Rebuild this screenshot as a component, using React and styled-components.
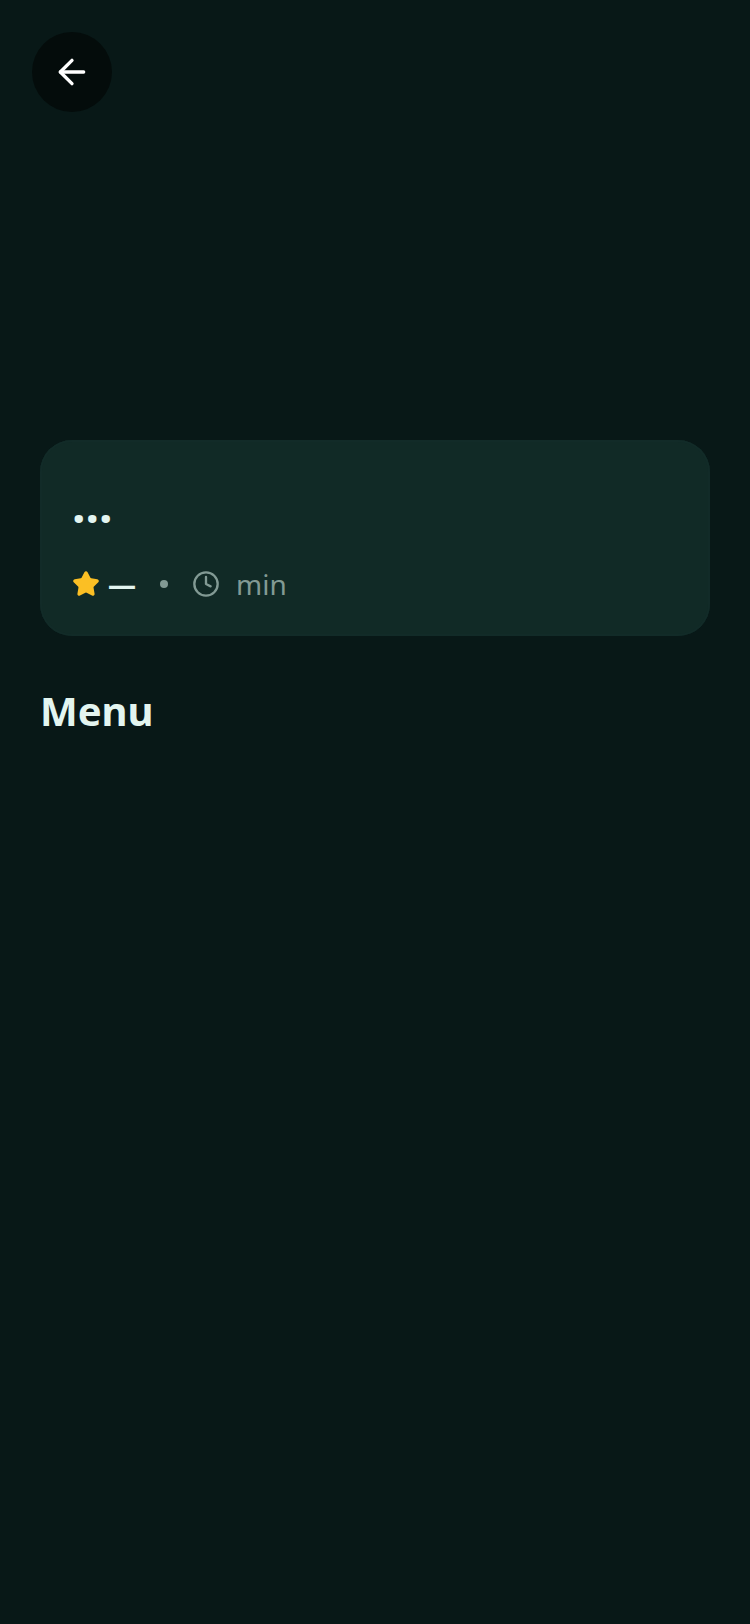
import styled, { createGlobalStyle } from "styled-components";
import { ArrowLeft, Clock, Star } from "lucide-react";

const GlobalStyle = createGlobalStyle`
  * {
    box-sizing: border-box;
  }
  body {
    margin: 0;
    background: #081817;
    color: #e3f5f0;
    font-family: "Noto Sans", sans-serif;
  }
`;

const Hero = styled.header`
  height: 440px;
  padding: 32px;
`;

const BackButton = styled.button`
  display: flex;
  align-items: center;
  justify-content: center;
  width: 80px;
  height: 80px;
  padding: 0;
  border: none;
  border-radius: 50%;
  background: #040c0b;
  color: #ffffff;
  cursor: pointer;
`;

const Content = styled.main`
  padding: 0 40px;
`;

const InfoCard = styled.section`
  padding: 32px;
  border-radius: 32px;
  background: #112a26;
  box-shadow: inset 0 0 0 2px #122b28;
`;

const Name = styled.h1`
  margin: 0;
  font-size: 48px;
  line-height: 66px;
  font-weight: 700;
`;

const Meta = styled.div`
  display: flex;
  align-items: center;
  gap: 24px;
  margin-top: 26px;
  font-size: 28px;
  line-height: 40px;
`;

const MetaItem = styled.div`
  display: flex;
  align-items: center;
  gap: ${(props) => props.$gap};
  color: ${(props) => (props.$muted ? "#829a94" : "inherit")};
  font-weight: ${(props) => (props.$muted ? 400 : 700)};
`;

const Dot = styled.span`
  width: 8px;
  height: 8px;
  border-radius: 50%;
  background: #829a94;
`;

const MenuTitle = styled.h2`
  margin: 48px 0 0;
  font-size: 40px;
  line-height: 54px;
  font-weight: 700;
`;

const App = () => (
  <>
    <GlobalStyle />
    <Hero>
      <BackButton type="button" aria-label="Back">
        <ArrowLeft size={40} />
      </BackButton>
    </Hero>
    <Content>
      <InfoCard>
        <Name>...</Name>
        <Meta>
          <MetaItem $gap="8px">
            <Star size={28} color="#fbbf24" fill="#fbbf24" />
            <span>—</span>
          </MetaItem>
          <Dot />
          <MetaItem $gap="16px" $muted>
            <Clock size={28} />
            <span>min</span>
          </MetaItem>
        </Meta>
      </InfoCard>
      <MenuTitle>Menu</MenuTitle>
    </Content>
  </>
);

export default App;
